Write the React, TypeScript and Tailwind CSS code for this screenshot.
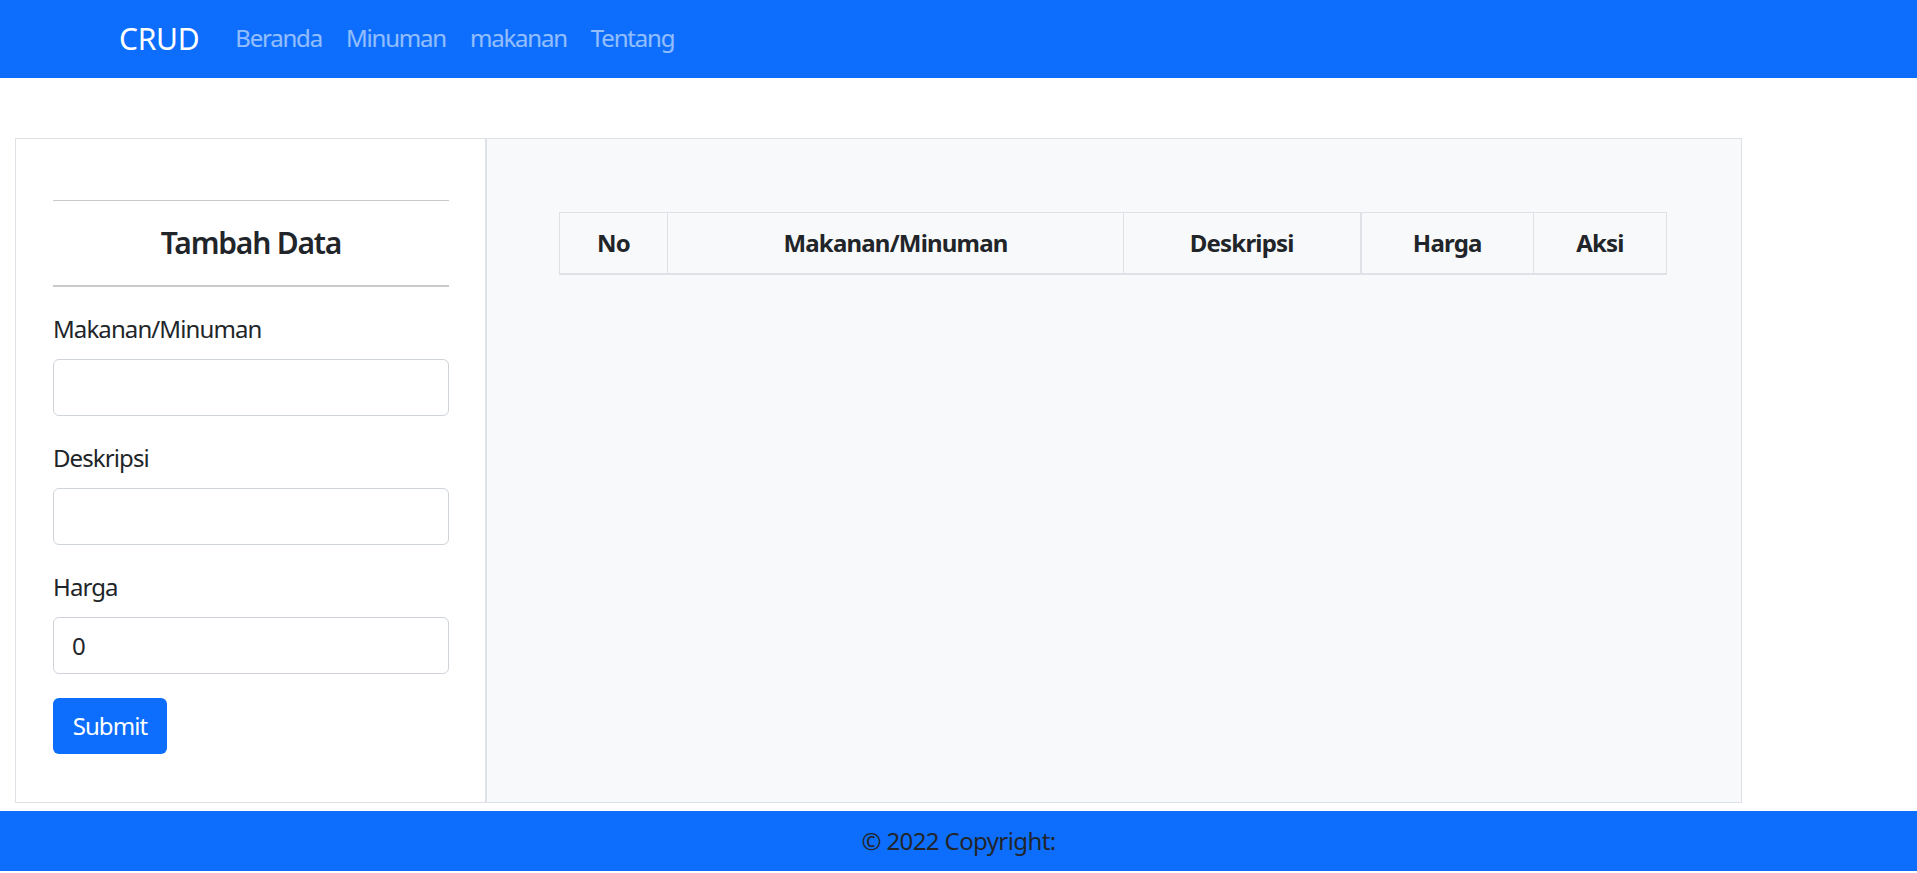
import React from "react";

const font = { fontFamily: '"Noto Sans", "Open Sans", sans-serif' };

export default function App() {
  return (
    <div className="min-h-[873px] bg-white text-[#212529]" style={font}>
      <nav className="flex h-[78px] items-center bg-[#0d6efd] pb-[2px] pl-[119px]">
        <span className="mr-[24px] text-[30px] leading-[45px] tracking-[-0.3px] text-white">CRUD</span>
        <div className="flex">
          {["Beranda", "Minuman", "makanan", "Tentang"].map((t) => (
            <a key={t} className="px-[12px] text-[24px] leading-[36px] tracking-[-1.2px] text-white/55">
              {t}
            </a>
          ))}
        </div>
      </nav>

      <div className="ml-[15px] mt-[60px] flex h-[665px] w-[1727px] border border-[#dee2e6]">
        <div className="w-[471px] border-r-2 border-[#dee2e6] bg-white pl-[37px] pr-[36px] pt-[61px]">
          <div className="h-px bg-[#c9cacb]" />
          <h5 className="my-[24px] text-center text-[30px] font-semibold leading-[36px] tracking-[-1.2px]">
            Tambah Data
          </h5>
          <div className="h-[2px] bg-[#c9cacb]" />
          <form className="mt-[24px] tracking-[-0.9px]">
            <label className="mb-[12px] block text-[24px] leading-[36px]">Makanan/Minuman</label>
            <input className="mb-[24px] block h-[57px] w-full rounded-[6px] border border-[#ced4da] bg-white px-[18px] text-[24px]" />
            <label className="mb-[12px] block text-[24px] leading-[36px]">Deskripsi</label>
            <input className="mb-[24px] block h-[57px] w-full rounded-[6px] border border-[#ced4da] bg-white px-[18px] text-[24px]" />
            <label className="mb-[12px] block text-[24px] leading-[36px]">Harga</label>
            <input
              defaultValue="0"
              className="mb-[24px] block h-[57px] w-full rounded-[6px] border border-[#ced4da] bg-white px-[18px] text-[24px] text-[#212529]"
            />
            <button
              type="button"
              className="h-[56px] w-[114px] rounded-[6px] bg-[#0d6efd] text-[24px] leading-[36px] text-white"
            >
              Submit
            </button>
          </form>
        </div>

        <div className="flex-1 bg-[#f8f9fa] px-[72px] pt-[73px]">
          <table className="w-[1107px] table-fixed border-collapse">
            <colgroup>
              <col className="w-[108px]" />
              <col className="w-[456px]" />
              <col className="w-[237px]" />
              <col className="w-[173px]" />
              <col className="w-[133px]" />
            </colgroup>
            <thead>
              <tr className="border-b-2 border-[#dee2e6]">
                {["No", "Makanan/Minuman", "Deskripsi", "Harga", "Aksi"].map((h, i) => (
                  <th
                    key={h}
                    className={`border-t border-[#dee2e6] ${i === 0 ? "border-l" : ""} ${i === 2 ? "border-r-2" : "border-r"} h-[61px] text-center text-[24px] font-bold leading-[36px] tracking-[-0.8px]`}
                  >
                    {h}
                  </th>
                ))}
              </tr>
            </thead>
          </table>
        </div>
      </div>

      <footer className="mt-[8px] flex h-[60px] items-center justify-center bg-[#0d6efd] text-[24px] tracking-[-0.6px] text-[#212529]">
        © 2022 Copyright:
      </footer>
    </div>
  );
}
